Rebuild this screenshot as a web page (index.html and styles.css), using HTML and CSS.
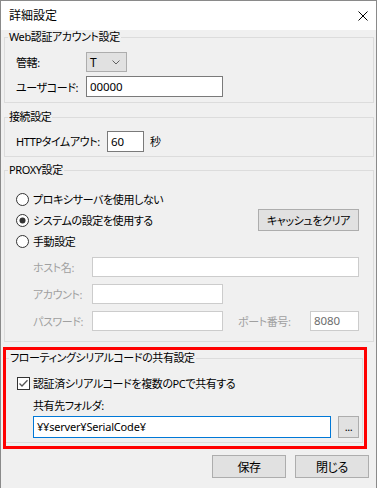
FILE: index.html
```html
<!DOCTYPE html>
<html lang="ja">
<head>
<meta charset="utf-8">
<link rel="stylesheet" href="styles.css">
</head>
<body>
<div class="window">
  <div class="titlebar">
    <span class="title">詳細設定</span>
    <svg class="close" width="10" height="10" viewBox="0 0 10 10"><path d="M0.5 0.5 L9.5 9.5 M9.5 0.5 L0.5 9.5" stroke="#000" stroke-width="1" fill="none"/></svg>
  </div>
  <div class="client">
    <fieldset class="group g1">
      <legend>Web認証アカウント設定</legend>
      <div class="row r20">
        <span class="lbl w70">管轄:</span>
        <div class="select"><span>T</span><svg class="chev" width="8" height="5" viewBox="0 0 8 5"><path d="M0.5 0.5 L4 4 L7.5 0.5" fill="none" stroke="#606060" stroke-width="1"/></svg></div>
      </div>
      <div class="row r21 mt4">
        <span class="lbl w70">ユーザコード:</span>
        <div class="input w137">00000</div>
      </div>
    </fieldset>

    <fieldset class="group g2">
      <legend>接続設定</legend>
      <div class="row r20">
        <span class="lbl w91">HTTPタイムアウト:</span>
        <div class="input w37">60</div>
        <span class="unit">秒</span>
      </div>
    </fieldset>

    <fieldset class="group g3">
      <legend>PROXY設定</legend>
      <div class="row r20">
        <svg class="radio" width="13" height="13" viewBox="0 0 13 13"><circle cx="6.5" cy="6.5" r="6" fill="#fff" stroke="#333"/></svg>
        <span>プロキシサーバを使用しない</span>
      </div>
      <div class="row r22">
        <svg class="radio" width="13" height="13" viewBox="0 0 13 13"><circle cx="6.5" cy="6.5" r="6" fill="#fff" stroke="#333"/><circle cx="6.5" cy="6.5" r="3" fill="#333"/></svg>
        <span>システムの設定を使用する</span>
        <div class="btn cache">キャッシュをクリア</div>
      </div>
      <div class="row r20">
        <svg class="radio" width="13" height="13" viewBox="0 0 13 13"><circle cx="6.5" cy="6.5" r="6" fill="#fff" stroke="#333"/></svg>
        <span>手動設定</span>
      </div>
      <div class="row r20 mt6 sub">
        <span class="lbl dis w59">ホスト名:</span>
        <div class="input disabled w267"></div>
      </div>
      <div class="row r20 mt7 sub">
        <span class="lbl dis w59">アカウント:</span>
        <div class="input disabled w131"></div>
      </div>
      <div class="row r20 mt7 sub">
        <span class="lbl dis w59">パスワード:</span>
        <div class="input disabled w131"></div>
        <span class="lbl dis port">ポート番号:</span>
        <div class="input disabled w49 gray">8080</div>
      </div>
    </fieldset>

    <fieldset class="group g4">
      <legend>フローティングシリアルコードの共有設定</legend>
      <div class="row r16">
        <svg class="check" width="13" height="13" viewBox="0 0 13 13"><rect x="0.5" y="0.5" width="12" height="12" fill="#fff" stroke="#333"/><path d="M2.5 6.5 L5 9 L10.5 3.2" fill="none" stroke="#555" stroke-width="1.3"/></svg>
        <span>認証済シリアルコードを複数のPCで共有する</span>
      </div>
      <div class="row r14 mt7 sub2">
        <span>共有先フォルダ:</span>
      </div>
      <div class="row r22 mt4 sub2">
        <div class="input focus w298">¥¥server¥SerialCode¥</div>
        <div class="btn dots">...</div>
      </div>
    </fieldset>

    <div class="footer">
      <div class="btn big">保存</div>
      <div class="btn big">閉じる</div>
    </div>
  </div>
  <div class="highlight"></div>
</div>
</body>
</html>
```

FILE: styles.css
```css
html, body {
  margin: 0;
  padding: 0;
  background: #ffffff;
}
body {
  font-family: "Noto Sans", "Noto Sans CJK JP", sans-serif;
  font-size: 11px;
  letter-spacing: -0.4px;
  color: #000;
  font-feature-settings: "palt";
}
.window {
  position: relative;
  width: 375px;
  height: 487px;
  border: 1px solid #8a8a8a;
  border-bottom: none;
  background: #f0f0f0;
}
.titlebar {
  height: 29px;
  background: #fff;
  display: flex;
  align-items: center;
  justify-content: space-between;
  padding: 0 8px 0 8px;
}
.title {
  font-size: 12px;
  letter-spacing: 0;
  line-height: 14px;
}
.client {
  padding: 0 0 0 3px;
}
.group {
  box-sizing: border-box;
  width: 370px;
  margin: 0;
  border: 1px solid #dcdcdc;
  min-width: 0;
  padding: 8px 14px 5px 11px;
}
.group legend {
  font-size: 11px;
  line-height: 14px;
  padding: 0 1px;
  margin-left: -8px;
}
.g2 { margin-top: 7px; padding-top: 7px; padding-bottom: 5px; }
.g3 { margin-top: 6px; padding-top: 12px; padding-bottom: 10px; }
.g4 {
  width: 359px;
  margin-top: 9px;
  padding: 10px 14px 4px 12px;
}
.row {
  display: flex;
  align-items: center;
  white-space: nowrap;
}
.r14 { height: 14px; }
.r16 { height: 16px; }
.r20 { height: 20px; }
.r21 { height: 21px; }
.r22 { height: 22px; }
.mt4 { margin-top: 4px; }
.mt6 { margin-top: 6px; }
.mt7 { margin-top: 7px; }
.sub { padding-left: 17px; }
.sub2 { padding-left: 16px; }
.lbl { flex: none; }
.w70 { width: 70px; }
.w91 { width: 91px; }
.w59 { width: 59px; }
.dis { color: #a0a0a0; }
.port { margin-left: 15px; width: 72px; }
.input {
  box-sizing: border-box;
  height: 21px;
  background: #fff;
  border: 1px solid #7a7a7a;
  padding: 0 3px;
  line-height: 19px;
  flex: none;
  font-size: 11.5px;
  letter-spacing: -0.1px;
}
.input.disabled { border-color: #cccccc; height: 20px; line-height: 18px; }
.input.gray { color: #6d6d6d; }
.input.focus { border-color: #0078d7; height: 22px; line-height: 20px; font-size: 11px; letter-spacing: -0.2px; }
.w137 { width: 137px; }
.w37 { width: 37px; }
.w267 { width: 267px; }
.w131 { width: 131px; }
.w49 { width: 49px; }
.w298 { width: 298px; }
.unit { margin-left: 6px; }
.select {
  box-sizing: border-box;
  width: 41px;
  height: 20px;
  background: #e1e1e1;
  border: 1px solid #adadad;
  display: flex;
  align-items: center;
  padding: 0 6px 0 3px;
  font-size: 12px;
}
.select .chev { margin-left: auto; }
.radio { flex: none; margin-right: 4px; }
.check { flex: none; margin-right: 3px; }
.btn {
  box-sizing: border-box;
  background: #e1e1e1;
  border: 1px solid #adadad;
  display: flex;
  align-items: center;
  justify-content: center;
  flex: none;
}
.cache {
  width: 101px;
  height: 22px;
  margin-left: auto;
}
.dots {
  width: 21px;
  height: 22px;
  margin-left: 7px;
  line-height: 1;
  padding-bottom: 2px;
}
.footer {
  display: flex;
  justify-content: flex-end;
  gap: 9px;
  margin-top: 12px;
  padding-right: 7px;
}
.big {
  width: 74px;
  height: 23px;
  font-size: 12px;
}
.highlight {
  position: absolute;
  left: 2px;
  top: 346px;
  width: 364px;
  height: 102px;
  box-sizing: border-box;
  border: 3px solid #ff0000;
  pointer-events: none;
}
```
